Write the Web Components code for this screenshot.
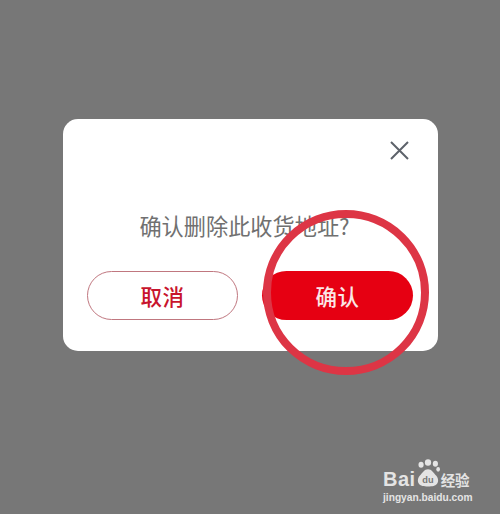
<!DOCTYPE html>
<html lang="zh">
<head>
<meta charset="utf-8">
<title>确认删除</title>
<style>
  html, body { margin: 0; height: 100%; background: #777; }
  body { font-family: "Liberation Sans", "Noto Sans CJK SC", sans-serif; }
</style>
</head>
<body>
<app-screen>
  <confirm-dialog message="确认删除此收货地址?">
    <pill-button variant="outline">取消</pill-button>
    <pill-button variant="solid">确认</pill-button>
  </confirm-dialog>
  <annotation-ring slot="overlay"></annotation-ring>
  <baidu-mark slot="overlay"></baidu-mark>
</app-screen>

<script>
// Full window backdrop, holds the dialog and whatever lies over it
class AppScreen extends HTMLElement {
  constructor() {
    super();
    this.attachShadow({ mode: 'open' });
    this.shadowRoot.innerHTML = `
      <style>
        :host {
          display: block;
          position: relative;
          width: 500px;
          height: 514px;
          overflow: hidden;
          background: #777;
        }
        .center {
          display: flex;
          justify-content: center;
          padding-top: 118.5px;
        }
      </style>
      <div class="center"><slot></slot></div>
      <slot name="overlay"></slot>
    `;
  }
}

class ConfirmDialog extends HTMLElement {
  constructor() {
    super();
    this.attachShadow({ mode: 'open' });
    this.render();
  }

  render() {
    const message = this.getAttribute('message') || '';
    this.shadowRoot.innerHTML = `
      <style>
        :host {
          display: flex;
          flex-direction: column;
          box-sizing: border-box;
          width: 375px;
          height: 232.5px;
          padding: 22px 24.5px 31px;
          background: #fff;
          border-radius: 15px;
        }
        .close {
          display: flex;
          justify-content: flex-end;
          height: 19px;
          padding-right: 4px;
        }
        .close svg { display: block; }
        .message {
          margin: 0;
          padding: 49px 11px 0 0;
          height: 33px;
          line-height: 33px;
          text-align: center;
          font-size: 22.2px;
          color: #707070;
          font-family: "Noto Sans CJK SC", "Liberation Sans", sans-serif;
        }
        .actions {
          display: flex;
          justify-content: space-between;
          margin-top: auto;
        }
      </style>
      <div class="close">
        <svg width="19" height="19" viewBox="0 0 19 19" fill="none" stroke="#5d626a" stroke-width="2">
          <path d="M1 1 L18 18 M18 1 L1 18"/>
        </svg>
      </div>
      <p class="message">${message}</p>
      <div class="actions"><slot></slot></div>
    `;
  }
}

class PillButton extends HTMLElement {
  constructor() {
    super();
    this.attachShadow({ mode: 'open' });
    this.shadowRoot.innerHTML = `
      <style>
        :host {
          display: flex;
          align-items: center;
          justify-content: center;
          box-sizing: border-box;
          width: 151px;
          height: 49px;
          border-radius: 25px;
          font-family: "Noto Sans CJK SC", "Liberation Sans", sans-serif;
          font-size: 21.5px;
          font-weight: 500;
          letter-spacing: 0.5px;
        }
        :host([variant="outline"]) {
          background: #fff;
          border: 1px solid #c0777f;
          color: #c8142d;
        }
        :host([variant="solid"]) {
          background: #e60012;
          color: #fbe6e6;
        }
      </style>
      <slot></slot>
    `;
  }
}

// Red hand drawn style circle that marks the confirm button
class AnnotationRing extends HTMLElement {
  constructor() {
    super();
    this.attachShadow({ mode: 'open' });
    this.shadowRoot.innerHTML = `
      <style>
        :host {
          display: block;
          position: absolute;
          left: 263px;
          top: 210px;
          width: 166px;
          height: 165px;
          pointer-events: none;
        }
        svg { display: block; }
      </style>
      <svg width="166" height="165" viewBox="0 0 166 165" fill="none">
        <ellipse cx="83" cy="82.5" rx="79" ry="78.5" stroke="#dd3545" stroke-width="8"/>
      </svg>
    `;
  }
}

// Watermark in the bottom right corner
class BaiduMark extends HTMLElement {
  constructor() {
    super();
    this.attachShadow({ mode: 'open' });
    this.shadowRoot.innerHTML = `
      <style>
        :host {
          display: block;
          position: absolute;
          left: 383px;
          top: 459px;
          width: 92px;
          color: #e4e4e4;
          font-family: "Liberation Sans", "Noto Sans CJK SC", sans-serif;
        }
        .top {
          display: flex;
          align-items: flex-end;
          height: 31px;
        }
        .bai {
          font-size: 20px;
          font-weight: 700;
          line-height: 22px;
          letter-spacing: 0.5px;
        }
        svg { display: block; flex: none; margin: 0 1px 1px 0; }
        .jy {
          font-family: "Noto Sans CJK SC", sans-serif;
          font-size: 14.5px;
          line-height: 20px;
          font-weight: 700;
        }
        .url {
          font-size: 10.2px;
          font-weight: 700;
          line-height: 12px;
          margin-top: 2px;
          white-space: nowrap;
        }
      </style>
      <div class="top">
        <span class="bai">Bai</span>
        <svg width="24" height="31" viewBox="0 0 26 31" fill="#e4e4e4">
          <ellipse cx="13" cy="3.5" rx="3.4" ry="3.5"/>
          <ellipse cx="21" cy="5" rx="2.8" ry="3.2"/>
          <ellipse cx="5.5" cy="6" rx="2.8" ry="3.2"/>
          <ellipse cx="24" cy="11" rx="2" ry="2.6"/>
          <path d="M13 11 C9 11 7 15 4 18 C1 21 1 28 7 29 C10 29.6 16 29.6 19 29 C25 28 25 21 22 18 C19 15 17 11 13 11 Z"/>
          <text x="13" y="26" text-anchor="middle" font-size="10" font-weight="700" fill="#777" font-family="Liberation Sans, sans-serif">du</text>
        </svg>
        <span class="jy">经验</span>
      </div>
      <div class="url">jingyan.baidu.com</div>
    `;
  }
}

customElements.define('app-screen', AppScreen);
customElements.define('confirm-dialog', ConfirmDialog);
customElements.define('pill-button', PillButton);
customElements.define('annotation-ring', AnnotationRing);
customElements.define('baidu-mark', BaiduMark);
</script>
</body>
</html>
